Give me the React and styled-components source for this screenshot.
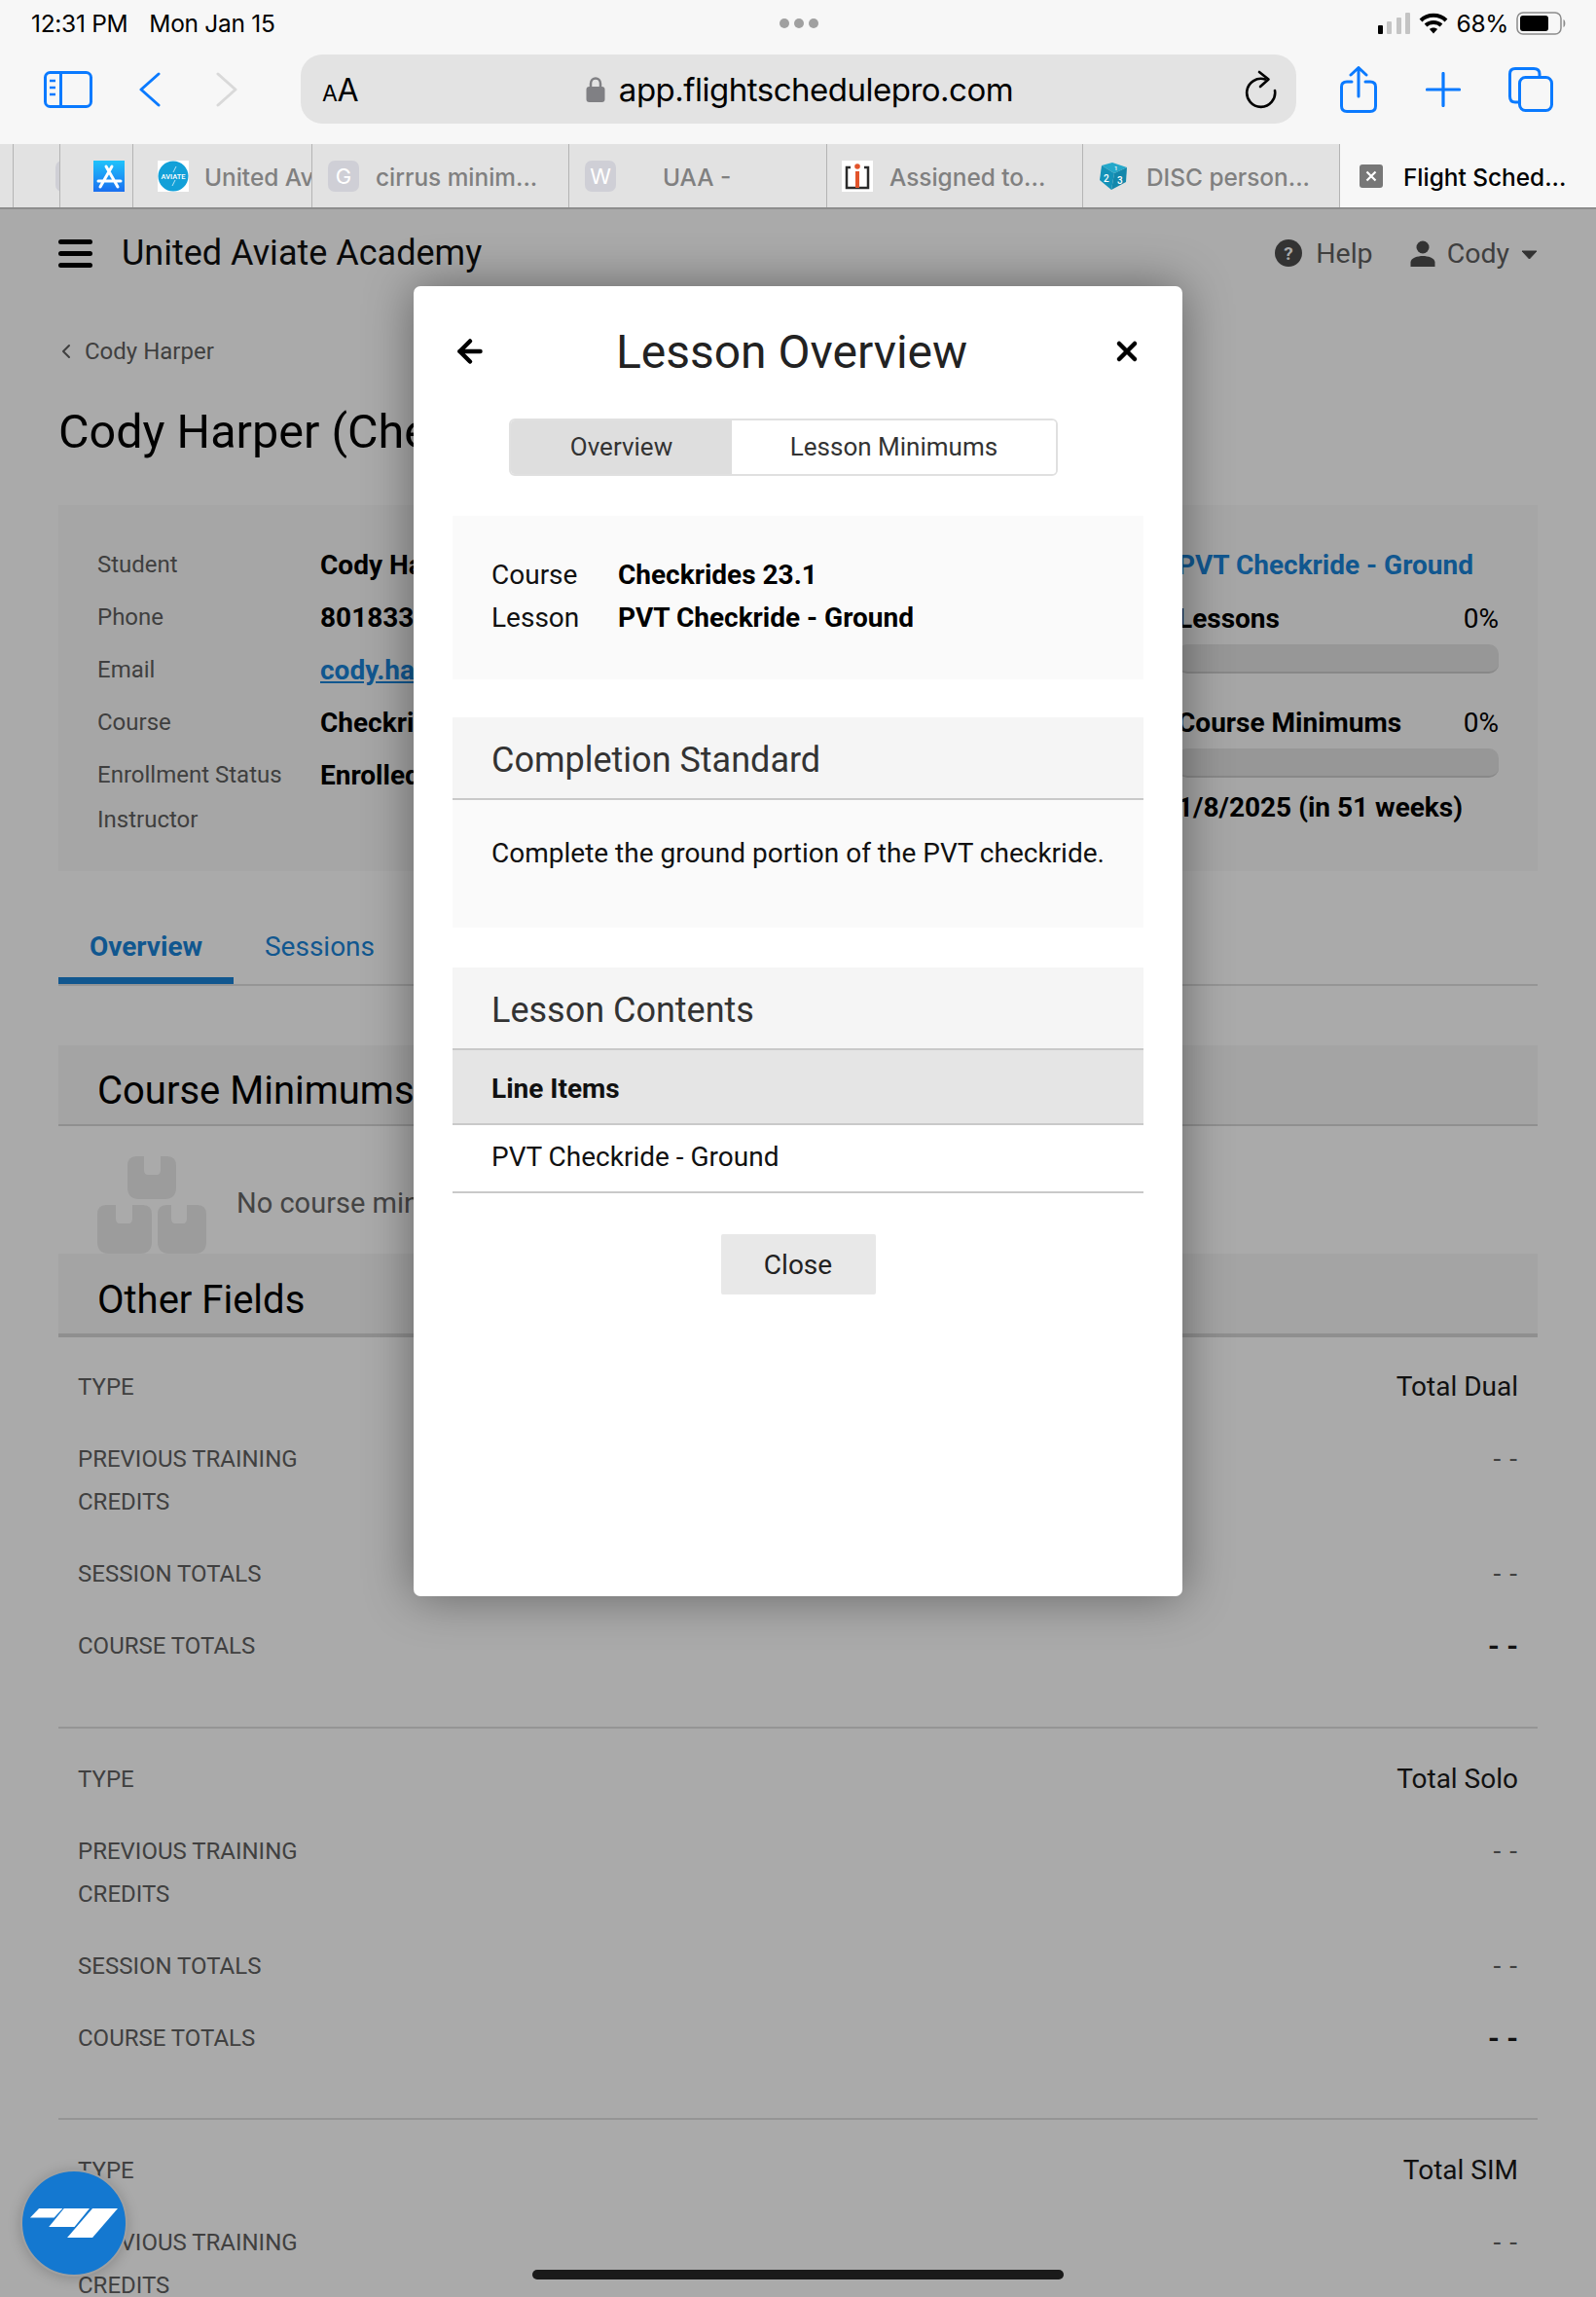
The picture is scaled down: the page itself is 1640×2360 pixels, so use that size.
import React from "react";
import styled, { createGlobalStyle } from "styled-components";
import { ArrowLeft, X, ChevronLeft } from "lucide-react";

const GlobalStyle = createGlobalStyle`
  html, body {
    margin: 0;
    height: 2360px;
    overflow: hidden;
    background: #aaaaaa;
    font-family: Roboto, "Liberation Sans", sans-serif;
  }
  * { box-sizing: border-box; }
`;

const Page = styled.div`
  position: relative;
  width: 1640px;
  height: 2360px;
  overflow: hidden;
`;

/* ios chrome */
const StatusBar = styled.div`
  height: 48px;
  background: #f7f7f7;
  display: grid;
  grid-template-columns: 1fr auto 1fr;
  align-items: center;
  padding: 0 30px 0 32px;
  font-family: Inter, sans-serif;
  font-size: 24.5px;
  letter-spacing: -0.3px;
  color: #000;
`;
const StatusLeft = styled.div`
  display: flex;
  gap: 22px;
`;
const Dots = styled.div`
  display: flex;
  gap: 5px;
  span {
    width: 10px;
    height: 10px;
    border-radius: 50%;
    background: #a0a0a0;
  }
`;
const StatusRight = styled.div`
  display: flex;
  justify-content: flex-end;
  align-items: center;
  gap: 8px;
`;
const Toolbar = styled.div`
  height: 100px;
  background: #f7f7f7;
  display: flex;
  align-items: flex-start;
  padding: 8px 0 0 45px;
`;
const ToolIcon = styled.div`
  width: ${(p) => p.$w}px;
  height: 71px;
  margin-left: ${(p) => p.$ml || 0}px;
  display: flex;
  align-items: center;
  justify-content: center;
`;
const AddressBar = styled.div`
  position: relative;
  width: 1023px;
  height: 71px;
  margin-left: 65px;
  border-radius: 22px;
  background: #e3e3e3;
  display: flex;
  align-items: center;
  justify-content: center;
  padding-left: 2px;
  gap: 14px;
  font-family: Inter, sans-serif;
  font-size: 33px;
  letter-spacing: -0.5px;
  color: #000;
`;
const TextSize = styled.div`
  position: absolute;
  left: 22px;
  top: 18px;
  font-size: 32px;
  line-height: 38px;
  small {
    font-size: 23px;
  }
`;
const ReloadSlot = styled.div`
  position: absolute;
  right: 19px;
  top: 16px;
  height: 40px;
`;
const TabStrip = styled.div`
  height: 67px;
  background: #e2e2e2;
  border-bottom: 2px solid #8d8d8d;
  display: flex;
`;
const Tab = styled.div`
  flex: none;
  width: ${(p) => p.$w}px;
  padding-left: ${(p) => p.$pad || 0}px;
  display: flex;
  align-items: center;
  gap: ${(p) => p.$gap || 0}px;
  overflow: hidden;
  white-space: nowrap;
  border-right: ${(p) => (p.$active ? "none" : "1px solid #b4b4b4")};
  background: ${(p) => (p.$active ? "#f7f7f7" : "transparent")};
  color: ${(p) => (p.$active ? "#000" : "#808080")};
  font-family: Inter, sans-serif;
  font-size: 24.4px;
  font-weight: 500;
`;
const TabText = styled.span`
  padding-top: 2px;
`;
const Letter = styled.div`
  flex: none;
  width: 32px;
  height: 32px;
  margin-left: ${(p) => p.$ml || 0}px;
  border-radius: 7px;
  background: #cfcfd6;
  color: #fff;
  font-size: 22px;
  font-weight: 400;
  display: flex;
  align-items: center;
  justify-content: center;
`;
const FaviconSvg = styled.svg`
  flex: none;
  display: block;
`;

/* app behind the dialog */
const App = styled.div`
  position: relative;
  height: 2145px;
  background: #aaaaaa;
  padding: 0 60px;
  color: #000;
`;
const Header = styled.div`
  height: 90px;
  display: flex;
  align-items: center;
  gap: 30px;
`;
const Burger = styled.div`
  width: 35px;
  display: flex;
  flex-direction: column;
  gap: 7px;
  span {
    height: 5px;
    border-radius: 3px;
    background: #000;
  }
`;
const BrandName = styled.div`
  flex: 1;
  font-size: 36px;
  color: #0a0a0a;
`;
const HeaderLink = styled.div`
  display: flex;
  align-items: center;
  gap: ${(p) => p.$gap}px;
  margin-left: ${(p) => p.$ml || 0}px;
  font-size: 28.5px;
  color: #3f3f3f;
`;
const Crumb = styled.div`
  height: 40px;
  margin-top: 36px;
  display: flex;
  align-items: center;
  gap: 7px;
  font-size: 24px;
  color: #3f3f3f;
  svg {
    margin-left: -4px;
  }
`;
const PageTitle = styled.h1`
  margin: 28px 0 0;
  height: 69px;
  font-size: 48.5px;
  line-height: 70px;
  font-weight: 400;
  white-space: nowrap;
`;
const InfoPanel = styled.div`
  margin-top: 41px;
  height: 376px;
  background: #a6a6a6;
  display: grid;
  grid-template-columns: 1fr 330px;
  padding: 34px 40px 0;
`;
const InfoRow = styled.div`
  height: ${(p) => p.$h || 54}px;
  display: grid;
  grid-template-columns: 229px 1fr;
  align-items: center;
  white-space: nowrap;
`;
const InfoLabel = styled.div`
  font-size: 24px;
  color: #3f3f3f;
`;
const InfoValue = styled.div`
  font-size: 28px;
  font-weight: 700;
  a {
    color: #11578f;
    text-decoration: underline;
  }
`;
const ProgressColumn = styled.div`
  white-space: nowrap;
`;
const LessonLink = styled.div`
  height: 55px;
  line-height: 56px;
  font-size: 28px;
  font-weight: 700;
  color: #11578f;
`;
const ProgressHead = styled.div`
  height: 54px;
  margin-top: ${(p) => p.$mt || 0}px;
  display: flex;
  justify-content: space-between;
  align-items: center;
  font-size: 28px;
  font-weight: 700;
  span {
    font-weight: 400;
  }
`;
const ProgressTrack = styled.div`
  height: 30px;
  border-radius: 10px;
  background: #979797;
  border-bottom: 2px solid #888888;
`;
const DueDate = styled.div`
  margin-top: 14px;
  font-size: 28px;
  font-weight: 700;
`;
const TabBar = styled.div`
  margin-top: 50px;
  height: 68px;
  border-bottom: 2px solid #959595;
  display: flex;
  font-size: 28px;
`;
const PageTab = styled.div`
  width: ${(p) => p.$w}px;
  height: 66px;
  padding-top: 11px;
  text-align: center;
  color: #11578f;
  font-weight: ${(p) => (p.$active ? 700 : 400)};
  border-bottom: ${(p) => (p.$active ? "7px solid #11578f" : "none")};
`;
const SectionHead = styled.div`
  margin-top: ${(p) => p.$mt || 0}px;
  height: ${(p) => p.$h}px;
  background: #a4a4a4;
  border-bottom: ${(p) => p.$line}px solid #8f8f8f;
  padding: 12px 0 0 40px;
  display: flex;
  align-items: center;
  font-size: 40px;
  white-space: nowrap;
`;
const EmptyState = styled.div`
  height: 131px;
  padding: 31px 0 0 40px;
  display: flex;
  gap: 31px;
  white-space: nowrap;
  font-size: 29px;
  color: #444;
`;
const EmptyText = styled.div`
  padding-top: 31px;
`;
const FieldGroup = styled.div`
  padding: ${(p) => (p.$first ? 29 : 30)}px 20px 1px;
  height: ${(p) => p.$h}px;
  border-top: ${(p) => (p.$first ? "none" : "2px solid #959595")};
`;
const FieldRow = styled.div`
  display: flex;
  justify-content: space-between;
  margin-bottom: 30px;
  line-height: 44px;
`;
const FieldLabel = styled.div`
  width: 240px;
  font-size: 24px;
  color: #404040;
`;
const FieldValue = styled.div`
  font-size: ${(p) => (p.$strong ? 30 : 28)}px;
  font-weight: ${(p) => (p.$strong ? 700 : 400)};
  color: ${(p) => (p.$muted ? "#404040" : "#111")};
  letter-spacing: ${(p) => (p.$muted ? "1px" : "0")};
`;

/* dialog */
const Overlay = styled.div`
  position: absolute;
  inset: 0;
  display: flex;
  justify-content: center;
  align-items: flex-start;
  padding-top: 79px;
`;
const Modal = styled.div`
  width: 790px;
  height: 1346px;
  background: #fff;
  border-radius: 7px;
  padding: 0 40px;
  box-shadow: 0 0 50px rgba(0, 0, 0, 0.42);
  color: #111;
`;
const ModalHeader = styled.div`
  height: 136px;
  display: flex;
  align-items: center;
  justify-content: space-between;
  padding: 0 1px 2px 0;
`;
const ModalTitle = styled.div`
  font-size: 48px;
  color: #222;
  margin-left: -16px;
`;
const Segments = styled.div`
  width: 564px;
  height: 59px;
  margin-left: 58px;
  border: 2px solid #e0e0e0;
  border-radius: 6px;
  overflow: hidden;
  display: flex;
  font-size: 26px;
  color: #333;
`;
const Segment = styled.div`
  width: ${(p) => p.$w}px;
  padding-bottom: 2px;
  background: ${(p) => (p.$active ? "#dedede" : "#fff")};
  display: flex;
  align-items: center;
  justify-content: center;
`;
const LessonInfo = styled.div`
  margin-top: 41px;
  height: 168px;
  background: #fafafa;
  padding: 38px 40px 0;
`;
const LessonRow = styled.div`
  height: 44px;
  display: grid;
  grid-template-columns: 130px 1fr;
  align-items: center;
  font-size: 28px;
  b {
    font-weight: 700;
    color: #000;
  }
`;
const CardHead = styled.div`
  margin-top: ${(p) => p.$mt}px;
  height: 85px;
  background: #f5f5f5;
  border-bottom: 2px solid #c9c9c9;
  padding: 5px 0 0 40px;
  display: flex;
  align-items: center;
  font-size: 36px;
  color: #333;
`;
const CardBody = styled.div`
  height: 131px;
  background: #fafafa;
  padding: 35px 40px 0;
  font-size: 28px;
  line-height: 40px;
  white-space: nowrap;
`;
const LineHead = styled.div`
  height: 77px;
  background: #e5e5e5;
  border-bottom: 2px solid #c9c9c9;
  padding: 3px 0 0 40px;
  display: flex;
  align-items: center;
  font-size: 28px;
  font-weight: 700;
`;
const LineItem = styled.div`
  height: 70px;
  border-bottom: 2px solid #c9c9c9;
  padding: 0 0 3px 40px;
  display: flex;
  align-items: center;
  font-size: 28px;
`;
const CloseButton = styled.button`
  display: block;
  width: 159px;
  height: 62px;
  margin: 42px auto 0;
  border: none;
  border-radius: 2px;
  background: #e8e8e8;
  font-family: inherit;
  font-size: 28px;
  color: #222;
`;

const Fab = styled.div`
  position: absolute;
  left: 21px;
  top: 2229px;
  width: 110px;
  height: 110px;
  border-radius: 50%;
  background: #1478d0;
  border: 2px solid #a0a0a0;
  box-shadow: 0 2px 14px rgba(0, 0, 0, 0.2);
  display: flex;
  align-items: center;
  justify-content: center;
`;
const HomeBar = styled.div`
  position: absolute;
  left: 547px;
  top: 2332px;
  width: 546px;
  height: 10px;
  border-radius: 5px;
  background: #1a1a1a;
`;

const BLUE = "#0a7aff";

function SignalIcon() {
  return (
    <svg width="34" height="22" viewBox="0 0 34 22">
      <rect x="0" y="13" width="5" height="9" rx="1" fill="#000" />
      <rect x="9" y="9" width="5" height="13" rx="1" fill="#c4c4c4" />
      <rect x="19" y="5" width="5" height="17" rx="1" fill="#c4c4c4" />
      <rect x="28" y="0" width="5" height="22" rx="1" fill="#c4c4c4" />
    </svg>
  );
}

function WifiIcon() {
  return (
    <svg width="30" height="22" viewBox="0 0 30 22">
      <path d="M2 8 C9 1 21 1 28 8" fill="none" stroke="#000" strokeWidth="4" />
      <path d="M7 13 C11.500 9 18.500 9 23 13" fill="none" stroke="#000" strokeWidth="4" />
      <path d="M11 17 C13 15 17 15 19 17 L15 21.500 Z" fill="#000" />
    </svg>
  );
}

function BatteryIcon() {
  return (
    <svg width="52" height="24" viewBox="0 0 52 24">
      <rect x="1" y="1" width="45" height="22" rx="6" fill="none" stroke="#8c8c8c" strokeWidth="1.500" />
      <rect x="4" y="4" width="29" height="16" rx="3" fill="#000" />
      <path d="M48.500 8 C51 9 51 15 48.500 16 Z" fill="#8c8c8c" />
    </svg>
  );
}

function SidebarIcon() {
  return (
    <svg width="50" height="38" viewBox="0 0 50 38" fill="none" stroke={BLUE} strokeWidth="3">
      <rect x="1.500" y="1.500" width="47" height="35" rx="5" />
      <path d="M17.500 2 V36" />
      <path d="M6 10 H12 M6 17 H12 M6 24 H12" strokeWidth="2.500" />
    </svg>
  );
}

function Chevron({ flip, color }) {
  return (
    <svg width="22" height="36" viewBox="0 0 22 36" fill="none" stroke={color} strokeWidth="3" strokeLinecap="round" strokeLinejoin="round">
      <path d={flip ? "M2 2 L20 18 L2 34" : "M20 2 L2 18 L20 34"} />
    </svg>
  );
}

function LockIcon() {
  return (
    <svg width="20" height="26" viewBox="0 0 20 26">
      <path d="M5 11 V7 C5 -0.500 15 -0.500 15 7 V11" fill="none" stroke="#808084" strokeWidth="2.500" />
      <rect x="0.500" y="10" width="19" height="16" rx="3" fill="#808084" />
    </svg>
  );
}

function ReloadIcon() {
  return (
    <svg width="34" height="40" viewBox="18 12 34 40" fill="none" stroke="#000" strokeWidth="2.600" strokeLinecap="round" strokeLinejoin="round">
      <path d="M49 33 A14.500 14.500 0 1 1 39 21.500" />
      <path d="M33 14 L42.500 21.500 L34 29" />
    </svg>
  );
}

function ShareIcon() {
  return (
    <svg width="38" height="48" viewBox="0 0 38 48" fill="none" stroke={BLUE} strokeWidth="3" strokeLinecap="round" strokeLinejoin="round">
      <path d="M12 16 H7 C3.500 16 1.500 18 1.500 21 V41 C1.500 44.500 3.500 46.500 7 46.500 H31 C34.500 46.500 36.500 44.500 36.500 41 V21 C36.500 18 34.500 16 31 16 H26" />
      <path d="M19 31 V2 M11 9 L19 1.500 L27 9" />
    </svg>
  );
}

function PlusIcon() {
  return (
    <svg width="36" height="36" viewBox="0 0 36 36" fill="none" stroke={BLUE} strokeWidth="3.200" strokeLinecap="round">
      <path d="M18 1.500 V34.500 M1.500 18 H34.500" />
    </svg>
  );
}

function TabsIcon() {
  return (
    <svg width="46" height="46" viewBox="0 0 46 46" fill="none" stroke={BLUE} strokeWidth="3">
      <path d="M11 36 H7 C3.500 36 1.500 34 1.500 30 V7 C1.500 3.500 3.500 1.500 7 1.500 H26 C30 1.500 32 3.500 32 7 V10" />
      <rect x="11.500" y="10.500" width="33" height="34" rx="6" />
    </svg>
  );
}

function AppStoreFavicon() {
  return (
    <FaviconSvg width="32" height="32" viewBox="0 0 32 32">
      <defs>
        <linearGradient id="storeBlue" x1="0" y1="0" x2="0" y2="1">
          <stop offset="0" stopColor="#1fc3fb" />
          <stop offset="1" stopColor="#1a6ff0" />
        </linearGradient>
      </defs>
      <rect width="32" height="32" fill="url(#storeBlue)" />
      <path d="M19 6 L7 27 M13 6 L25 27 M5 21 H28" stroke="#fff" strokeWidth="3" strokeLinecap="round" fill="none" />
    </FaviconSvg>
  );
}

function AviateFavicon() {
  return (
    <FaviconSvg width="32" height="32" viewBox="0 0 32 32">
      <rect width="32" height="32" fill="#fff" />
      <circle cx="16" cy="16" r="15.500" fill="#12a0d8" />
      <text x="16" y="19" textAnchor="middle" fontSize="7.500" fill="#fff" fontFamily="Roboto">AVIATE</text>
      <path d="M19 6 L16 12 M18 20 L15 26" stroke="#fff" strokeWidth="0.700" />
    </FaviconSvg>
  );
}

function AssignedFavicon() {
  return (
    <FaviconSvg width="32" height="32" viewBox="0 0 32 32">
      <rect width="32" height="32" fill="#fff" />
      <path d="M9 7 H5 V28 H27 V7 H23" fill="none" stroke="#2b2b2b" strokeWidth="2.500" />
      <circle cx="16" cy="6" r="2.800" fill="#e2542b" />
      <rect x="14" y="11" width="4" height="17" fill="#e2542b" />
    </FaviconSvg>
  );
}

function DiscFavicon() {
  return (
    <FaviconSvg width="32" height="32" viewBox="18 10 32 32">
      <path d="M33 12 L48 17 L35 23 L22 15 Z" fill="#25a8ca" />
      <path d="M22 15 L35 23 L32 40 L20 30 Z" fill="#1492b8" />
      <path d="M35 23 L48 17 L47 32 L32 40 Z" fill="#1387ab" />
      <text x="35" y="20" fontSize="6" fill="#fff" fontFamily="Roboto">1</text>
      <text x="24" y="32" fontSize="10" fill="#fff" fontFamily="Roboto">2</text>
      <text x="38" y="34" fontSize="10" fill="#fff" fontFamily="Roboto">3</text>
    </FaviconSvg>
  );
}

function CloseFavicon() {
  return (
    <FaviconSvg width="24" height="32" viewBox="0 0 24 32">
      <rect y="4" width="24" height="24" rx="3" fill="#777" />
      <path d="M7.500 11.500 L16.500 20.500 M16.500 11.500 L7.500 20.500" stroke="#fff" strokeWidth="2.200" />
    </FaviconSvg>
  );
}

function HelpIcon() {
  return (
    <svg width="28" height="28" viewBox="0 0 28 28">
      <circle cx="14" cy="14" r="14" fill="#333" />
      <text x="14" y="21" textAnchor="middle" fontSize="19" fontWeight="700" fill="#aaa" fontFamily="Roboto">?</text>
    </svg>
  );
}

function PersonIcon() {
  return (
    <svg width="26" height="27" viewBox="0 0 26 27" fill="#333">
      <circle cx="13" cy="7" r="6.500" />
      <path d="M0.500 27 V22.500 C0.500 18 8 16 13 16 C18 16 25.500 18 25.500 22.500 V27 Z" />
    </svg>
  );
}

function CaretIcon() {
  return (
    <svg width="17" height="14" viewBox="0 0 17 14" fill="#333" stroke="#333" strokeWidth="1" strokeLinejoin="round">
      <path d="M1 5 H16 L8.500 13 Z" />
    </svg>
  );
}

function BoxesIcon() {
  // a box with a strip cut in its top edge
  const box = (x, y, w, h, cut, cutW) =>
    `M${x + 9} ${y} H${x + cut} V${y + 14} Q${x + cut} ${y + 19} ${x + cut + 4} ${y + 19} H${x + cut + cutW - 4} Q${x + cut + cutW} ${y + 19} ${x + cut + cutW} ${y + 14} V${y} H${x + w - 9} Q${x + w} ${y} ${x + w} ${y + 10} V${y + h - 12} Q${x + w} ${y + h} ${x + w - 12} ${y + h} H${x + 12} Q${x} ${y + h} ${x} ${y + h - 12} V${y + 10} Q${x} ${y} ${x + 9} ${y} Z`;
  return (
    <svg width="112" height="100" viewBox="0 0 112 100" fill="#9c9c9c">
      <path d={box(31, 0, 50, 44, 17, 17)} />
      <path d={box(0, 50, 56, 50, 19, 17)} />
      <path d={box(62, 50, 50, 50, 14, 16)} />
    </svg>
  );
}

function FabLogo() {
  return (
    <svg width="90" height="30" viewBox="95 267 267 89" fill="#fff">
      <path d="M95 295 L122 267 H194 L168 295 Z" />
      <path d="M198 267 H276 L230 323 H152 Z" />
      <path d="M285 267 H362 L285 356 H208 Z" />
    </svg>
  );
}

const infoRows = [
  { label: "Student", value: "Cody Harper" },
  { label: "Phone", value: "801833" },
  { label: "Email", value: <a>cody.harper</a> },
  { label: "Course", value: "Checkrides 23.1" },
  { label: "Enrollment Status", value: "Enrolled" },
  { label: "Instructor", value: "", h: 38 },
];

const fieldGroups = [
  { type: "Total Dual", h: 400, first: true },
  { type: "Total Solo", h: 402 },
  { type: "Total SIM", h: 402 },
];

function Fields({ type, h, first }) {
  return (
    <FieldGroup $h={h} $first={first}>
      <FieldRow>
        <FieldLabel>TYPE</FieldLabel>
        <FieldValue>{type}</FieldValue>
      </FieldRow>
      <FieldRow>
        <FieldLabel>PREVIOUS TRAINING CREDITS</FieldLabel>
        <FieldValue $muted>- -</FieldValue>
      </FieldRow>
      <FieldRow>
        <FieldLabel>SESSION TOTALS</FieldLabel>
        <FieldValue $muted>- -</FieldValue>
      </FieldRow>
      <FieldRow>
        <FieldLabel>COURSE TOTALS</FieldLabel>
        <FieldValue $strong>- -</FieldValue>
      </FieldRow>
    </FieldGroup>
  );
}

export default function AppPage() {
  return (
    <Page>
      <GlobalStyle />
      <StatusBar>
        <StatusLeft>
          <span>12:31 PM</span>
          <span>Mon Jan 15</span>
        </StatusLeft>
        <Dots>
          <span />
          <span />
          <span />
        </Dots>
        <StatusRight>
          <SignalIcon />
          <WifiIcon />
          <span>68%</span>
          <BatteryIcon />
        </StatusRight>
      </StatusBar>
      <Toolbar>
        <ToolIcon $w={50}>
          <SidebarIcon />
        </ToolIcon>
        <ToolIcon $w={22} $ml={48}>
          <Chevron color={BLUE} />
        </ToolIcon>
        <ToolIcon $w={22} $ml={57}>
          <Chevron flip color="#d9d9d9" />
        </ToolIcon>
        <AddressBar>
          <TextSize>
            <small>A</small>A
          </TextSize>
          <LockIcon />
          <span>app.flightschedulepro.com</span>
          <ReloadSlot>
            <ReloadIcon />
          </ReloadSlot>
        </AddressBar>
        <ToolIcon $w={38} $ml={45}>
          <ShareIcon />
        </ToolIcon>
        <ToolIcon $w={36} $ml={50}>
          <PlusIcon />
        </ToolIcon>
        <ToolIcon $w={46} $ml={49}>
          <TabsIcon />
        </ToolIcon>
      </Toolbar>
      <TabStrip>
        <Tab $w={14} />
        <Tab $w={48}>
          <Letter $ml={43} />
        </Tab>
        <Tab $w={75} $pad={34}>
          <AppStoreFavicon />
        </Tab>
        <Tab $w={184} $pad={25} $gap={16}>
          <AviateFavicon />
          <TabText>United Aviate</TabText>
        </Tab>
        <Tab $w={264} $pad={16} $gap={17}>
          <Letter>G</Letter>
          <TabText>cirrus minim...</TabText>
        </Tab>
        <Tab $w={265} $pad={16} $gap={48}>
          <Letter>W</Letter>
          <TabText>UAA -</TabText>
        </Tab>
        <Tab $w={263} $pad={15} $gap={17}>
          <AssignedFavicon />
          <TabText>Assigned to...</TabText>
        </Tab>
        <Tab $w={264} $pad={15} $gap={18}>
          <DiscFavicon />
          <TabText>DISC person...</TabText>
        </Tab>
        <Tab $w={263} $pad={20} $gap={21} $active>
          <CloseFavicon />
          <TabText>Flight Sched...</TabText>
        </Tab>
      </TabStrip>

      <App>
        <Header>
          <Burger>
            <span />
            <span />
            <span />
          </Burger>
          <BrandName>United Aviate Academy</BrandName>
          <HeaderLink $gap={14}>
            <HelpIcon />
            Help
          </HeaderLink>
          <HeaderLink $gap={12} $ml={8}>
            <PersonIcon />
            Cody
            <CaretIcon />
          </HeaderLink>
        </Header>
        <Crumb>
          <ChevronLeft size={24} strokeWidth={2} />
          Cody Harper
        </Crumb>
        <PageTitle>Cody Harper (Checkrides 23.1)</PageTitle>
        <InfoPanel>
          <div>
            {infoRows.map((row) => (
              <InfoRow key={row.label} $h={row.h}>
                <InfoLabel>{row.label}</InfoLabel>
                <InfoValue>{row.value}</InfoValue>
              </InfoRow>
            ))}
          </div>
          <ProgressColumn>
            <LessonLink>PVT Checkride - Ground</LessonLink>
            <ProgressHead>
              Lessons <span>0%</span>
            </ProgressHead>
            <ProgressTrack />
            <ProgressHead $mt={23}>
              Course Minimums <span>0%</span>
            </ProgressHead>
            <ProgressTrack />
            <DueDate>1/8/2025 (in 51 weeks)</DueDate>
          </ProgressColumn>
        </InfoPanel>
        <TabBar>
          <PageTab $w={180} $active>
            Overview
          </PageTab>
          <PageTab $w={177}>Sessions</PageTab>
        </TabBar>
        <SectionHead $mt={61} $h={83} $line={2}>
          Course Minimums
        </SectionHead>
        <EmptyState>
          <BoxesIcon />
          <EmptyText>No course minimums</EmptyText>
        </EmptyState>
        <SectionHead $h={86} $line={4}>
          Other Fields
        </SectionHead>
        {fieldGroups.map((group) => (
          <Fields key={group.type} {...group} />
        ))}

        <Overlay>
          <Modal>
            <ModalHeader>
              <ArrowLeft size={36} strokeWidth={3} color="#000" />
              <ModalTitle>Lesson Overview</ModalTitle>
              <X size={32} strokeWidth={3.4} color="#000" />
            </ModalHeader>
            <Segments>
              <Segment $w={227} $active>
                Overview
              </Segment>
              <Segment $w={333}>Lesson Minimums</Segment>
            </Segments>
            <LessonInfo>
              <LessonRow>
                Course <b>Checkrides 23.1</b>
              </LessonRow>
              <LessonRow>
                Lesson <b>PVT Checkride - Ground</b>
              </LessonRow>
            </LessonInfo>
            <CardHead $mt={39}>Completion Standard</CardHead>
            <CardBody>Complete the ground portion of the PVT checkride.</CardBody>
            <CardHead $mt={41}>Lesson Contents</CardHead>
            <LineHead>Line Items</LineHead>
            <LineItem>PVT Checkride - Ground</LineItem>
            <CloseButton>Close</CloseButton>
          </Modal>
        </Overlay>
      </App>

      <Fab>
        <FabLogo />
      </Fab>
      <HomeBar />
    </Page>
  );
}
